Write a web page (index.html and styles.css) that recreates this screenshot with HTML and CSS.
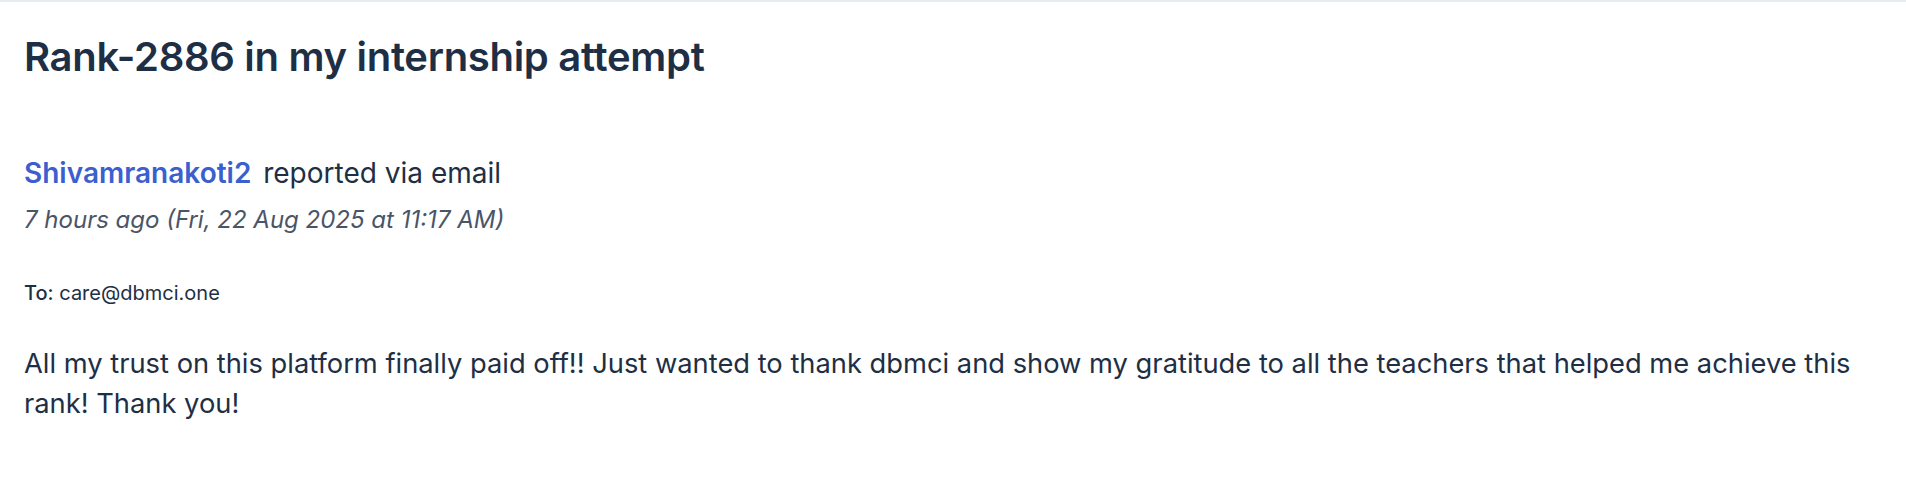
FILE: index.html
```html
<!DOCTYPE html>
<html lang="en">
<head>
<meta charset="utf-8">
<title>Rank-2886 in my internship attempt</title>
<link rel="stylesheet" href="styles.css">
</head>
<body>
<div class="page">
  <h1 class="title">Rank-2886 in my internship attempt</h1>
  <div class="meta">
    <div class="who"><a class="author" href="#">Shivamranakoti2</a> <span class="via">reported via email</span></div>
    <div class="when">7 hours ago (Fri, 22 Aug 2025 at 11:17 AM)</div>
  </div>
  <div class="to"><span class="to-label">To:</span> care@dbmci.one</div>
  <p class="body">All my trust on this platform finally paid off!! Just wanted to thank dbmci and show my gratitude to all the teachers that helped me achieve this rank! Thank you!</p>
</div>
</body>
</html>
```
FILE: styles.css
```css
html, body {
  margin: 0;
  padding: 0;
  background: #ffffff;
}
body {
  font-family: Inter, "Noto Sans", "Liberation Sans", sans-serif;
  color: #1e2f45;
}
.page {
  border-top: 2px solid #e6ebf0;
  padding: 0 24px 0 24px;
}
.title {
  margin: 0;
  padding-top: 31px;
  font-size: 40px;
  line-height: 48px;
  font-weight: 600;
  color: #1e2f45;
  letter-spacing: -0.3px;
}
.meta {
  margin-top: 74px;
}
.who {
  font-size: 28px;
  line-height: 36px;
}
.author {
  color: #3c5fcf;
  font-weight: 600;
  text-decoration: none;
  margin-right: 4px;
}
.via {
  color: #1e2f45;
}
.when {
  margin-top: 13px;
  font-size: 24px;
  line-height: 32px;
  font-style: italic;
  color: #4a5567;
}
.to {
  margin-top: 43px;
  font-size: 20px;
  line-height: 28px;
  color: #1e2f45;
}
.to-label {
  font-weight: 500;
}
.body {
  margin: 37px 0 0 0;
  font-size: 27.3px;
  line-height: 40px;
  color: #1e2f45;
}
```
